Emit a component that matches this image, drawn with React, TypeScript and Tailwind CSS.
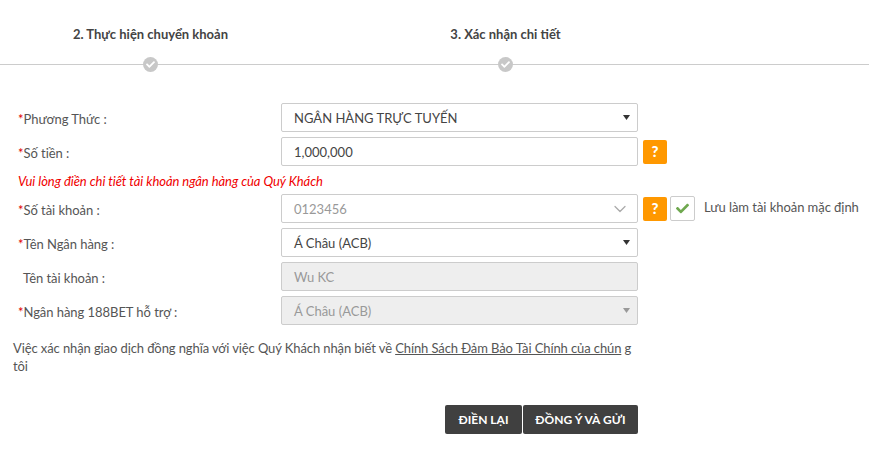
import { ChevronDown } from 'lucide-react';
import { FaCheck } from 'react-icons/fa';
import type { ReactNode } from 'react';

const font = { fontFamily: 'Lato, sans-serif' };

function StepDot() {
  return (
    <span className="absolute left-1/2 -bottom-[8px] -ml-[8px] w-[15px] h-[15px] rounded-full bg-[#c8c8c8] flex items-center justify-center">
      <FaCheck className="w-[9px] h-[9px] text-white" />
    </span>
  );
}

function Row({ label, required = true, children, extra }: { label: string; required?: boolean; children: ReactNode; extra?: ReactNode }) {
  return (
    <div className="flex items-center h-[29px] mb-[5px]">
      <div className="w-[281px] pl-[18px] pt-[4px] text-[13px] tracking-[-0.05px] text-[#555]">
        {required ? <span className="text-[#e00000]">*</span> : <span className="inline-block w-[5px]" />}
        {label}
      </div>
      <div className="relative w-[357px] h-[29px]">{children}</div>
      {extra}
    </div>
  );
}

function Field({ text, disabled, muted, right }: { text: string; disabled?: boolean; muted?: boolean; right?: ReactNode }) {
  return (
    <div
      className={`w-full h-full flex items-center justify-between pl-[12px] pr-[6px] rounded-[2px] border border-[#ccc] text-[13px] ${disabled ? 'bg-[#eee]' : 'bg-white'} ${muted || disabled ? 'text-[#999]' : 'text-[#444]'}`}
    >
      <span className="pt-[2px]">{text}</span>
      {right}
    </div>
  );
}

function Caret({ light }: { light?: boolean }) {
  return (
    <svg width="7" height="5" viewBox="0 0 7 5" className="mr-[1px]">
      <path d="M0 0h7L3.5 5z" fill={light ? '#999' : '#333'} />
    </svg>
  );
}

function Help() {
  return (
    <button className="ml-[5px] w-[24px] h-[24px] rounded-[2px] bg-[#ff9800] text-white text-[15px] font-black flex items-center justify-center">
      ?
    </button>
  );
}

export default function App() {
  return (
    <div className="w-[869px] h-[473px] bg-white overflow-hidden" style={font}>
      {/* Steps */}
      <div className="flex h-[64px] border-b border-[#ccc] box-content">
        <div className="relative w-[301px] pt-[25px] text-center text-[13px] font-bold text-[#444]">
          2. Thực hiện chuyển khoản
          <StepDot />
        </div>
        <div className="relative w-[409px] pt-[25px] text-center text-[13px] font-bold text-[#444]">
          3. Xác nhận chi tiết
          <StepDot />
        </div>
      </div>

      {/* Form */}
      <div className="pt-[38px]">
        <Row label="Phương Thức :">
          <Field text="NGÂN HÀNG TRỰC TUYẾN" right={<Caret />} />
        </Row>
        <Row label="Số tiền :" extra={<Help />}>
          <Field text="1,000,000" />
        </Row>
        <div className="h-[23px] pl-[18px] text-[13px] italic tracking-[-0.05px] text-[#f00000] leading-[20px]">
          Vui lòng điền chi tiết tài khoản ngân hàng của Quý Khách
        </div>
        <Row
          label="Số tài khoản :"
          extra={
            <>
              <Help />
              <span className="ml-[3px] w-[25px] h-[25px] rounded-[2px] border border-[#ccc] flex items-center justify-center">
                <FaCheck className="w-[13px] h-[13px] text-[#6fa84f]" />
              </span>
              <span className="ml-[9px] text-[13px] tracking-[-0.05px] text-[#555] -mt-[2px]">Lưu làm tài khoản mặc định</span>
            </>
          }
        >
          <Field text="0123456" muted right={<ChevronDown className="w-[20px] h-[20px] text-[#aaa] mr-[1px]" strokeWidth={1.5} />} />
        </Row>
        <Row label="Tên Ngân hàng :">
          <Field text="Á Châu (ACB)" right={<Caret />} />
        </Row>
        <Row label="Tên tài khoản :" required={false}>
          <Field text="Wu KC" disabled />
        </Row>
        <Row label="Ngân hàng 188BET hỗ trợ :">
          <Field text="Á Châu (ACB)" disabled right={<Caret light />} />
        </Row>

        <p className="mt-[14px] pl-[13px] text-[13px] tracking-[-0.1px] leading-[18px] text-[#555]">
          Việc xác nhận giao dịch đồng nghĩa với việc Quý Khách nhận biết về{' '}
          <span className="underline">Chính Sách Đảm Bảo Tài Chính của chún</span> g
          <br />
          tôi
        </p>

        <div className="mt-[30px] w-[638px] flex justify-end gap-[1px]">
          <button className="w-[77px] h-[29px] rounded-[2px] bg-[#404040] text-white text-[12px] font-bold">ĐIỀN LẠI</button>
          <button className="w-[115px] h-[29px] rounded-[2px] bg-[#404040] text-white text-[12px] font-bold">ĐỒNG Ý VÀ GỬI</button>
        </div>
      </div>
    </div>
  );
}
